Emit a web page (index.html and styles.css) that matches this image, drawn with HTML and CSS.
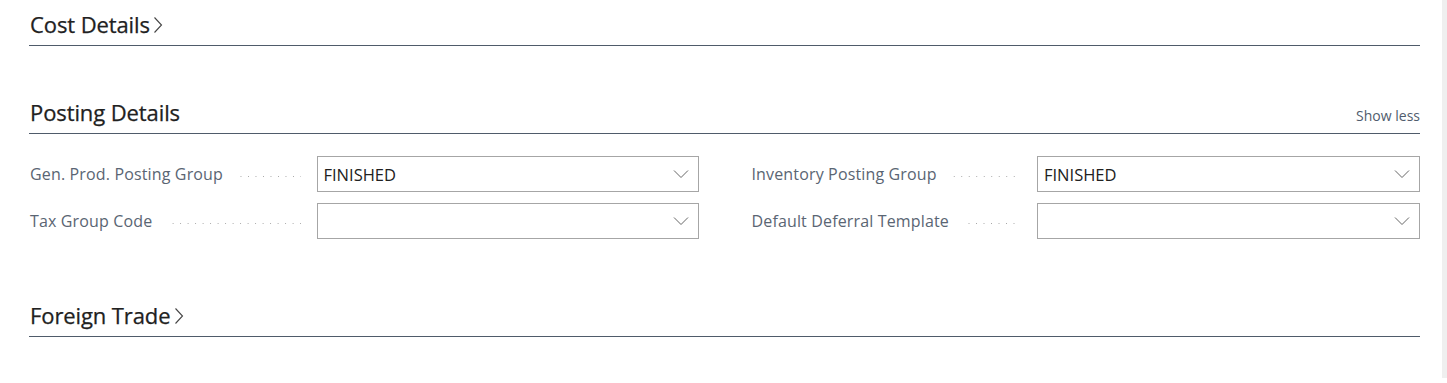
FILE: index.html
```html
<!DOCTYPE html>
<html lang="en">
<head>
    <meta charset="utf-8" />
    <title>Item Card - Posting Details</title>
    <link rel="stylesheet" href="styles.css">
</head>
<body>
    <div class="page">
        <div class="content">
            <div class="section collapsed">
                <div class="section-header">
                    <h2>Cost Details</h2>
                    <svg class="caret" width="10" height="18" viewBox="0 0 10 18"><path d="M1.5 1.5 L8.5 9 L1.5 16.5" fill="none" stroke="#444" stroke-width="1.1"/></svg>
                </div>
            </div>

            <div class="section expanded">
                <div class="section-header">
                    <h2>Posting Details</h2>
                    <span class="show-less">Show less</span>
                </div>
                <div class="fields">
                    <div class="column">
                        <div class="field">
                            <label>Gen. Prod. Posting Group</label>
                            <span class="leader"></span>
                            <div class="select">
                                <span class="value">FINISHED</span>
                                <svg class="chev" width="16" height="10" viewBox="0 0 16 10"><path d="M1 1.5 L8 8.5 L15 1.5" fill="none" stroke="#666" stroke-width="1"/></svg>
                            </div>
                        </div>
                        <div class="field">
                            <label>Tax Group Code</label>
                            <span class="leader"></span>
                            <div class="select">
                                <span class="value"></span>
                                <svg class="chev" width="16" height="10" viewBox="0 0 16 10"><path d="M1 1.5 L8 8.5 L15 1.5" fill="none" stroke="#666" stroke-width="1"/></svg>
                            </div>
                        </div>
                    </div>
                    <div class="column">
                        <div class="field">
                            <label>Inventory Posting Group</label>
                            <span class="leader"></span>
                            <div class="select">
                                <span class="value">FINISHED</span>
                                <svg class="chev" width="16" height="10" viewBox="0 0 16 10"><path d="M1 1.5 L8 8.5 L15 1.5" fill="none" stroke="#666" stroke-width="1"/></svg>
                            </div>
                        </div>
                        <div class="field">
                            <label>Default Deferral Template</label>
                            <span class="leader"></span>
                            <div class="select">
                                <span class="value"></span>
                                <svg class="chev" width="16" height="10" viewBox="0 0 16 10"><path d="M1 1.5 L8 8.5 L15 1.5" fill="none" stroke="#666" stroke-width="1"/></svg>
                            </div>
                        </div>
                    </div>
                </div>
            </div>

            <div class="section collapsed last">
                <div class="section-header">
                    <h2>Foreign Trade</h2>
                    <svg class="caret" width="10" height="18" viewBox="0 0 10 18"><path d="M1.5 1.5 L8.5 9 L1.5 16.5" fill="none" stroke="#444" stroke-width="1.1"/></svg>
                </div>
            </div>
        </div>
        <div class="scroll-track"></div>
    </div>
</body>
</html>
```

FILE: styles.css
```css
* { box-sizing: border-box; margin: 0; padding: 0; }
html, body {
    height: 100%;
}
body {
    font-family: "Open Sans", "Noto Sans", sans-serif;
    background: #fff;
    color: #212121;
}
.page {
    display: flex;
    height: 100%;
}
.content {
    flex: 1;
    padding: 0 22px 0 29px;
}
.scroll-track {
    width: 5px;
    height: 378px;
    background: #efefef;
}
.section-header {
    display: flex;
    align-items: center;
    border-bottom: 1px solid #4f5b6a;
    padding: 10px 0 7px 1px;
}
.section-header h2 {
    font-size: 22px;
    font-weight: 400;
    line-height: 28px;
    letter-spacing: -0.1px;
    -webkit-text-stroke: 0.25px #212121;
}
.caret {
    margin-left: 3px;
    margin-top: 1px;
}
.expanded {
    margin-top: 42px;
}
.expanded .section-header {
    justify-content: space-between;
}
.show-less {
    font-size: 14px;
    color: #505c6d;
    margin-top: 6px;
}
.fields {
    display: grid;
    grid-template-columns: 1fr 1fr;
    column-gap: 52px;
    padding-top: 22px;
}
.column {
    display: flex;
    flex-direction: column;
    gap: 11px;
}
.field {
    display: flex;
    align-items: center;
    height: 36px;
}
.field label {
    font-size: 16px;
    letter-spacing: 0.15px;
    color: #5a6573;
    white-space: nowrap;
    padding-left: 1px;
}
.leader {
    flex: 1;
    height: 1px;
    margin: 5px 16px 0 16px;
    background-image: linear-gradient(to right, #a8a8a8 1px, transparent 1px);
    background-size: 7.5px 1px;
    background-repeat: repeat-x;
    background-position: right;
}
.select {
    width: 382px;
    height: 36px;
    border: 1px solid #a6a6a6;
    display: flex;
    align-items: center;
    justify-content: space-between;
    padding: 0 9px 0 6px;
}
.column:last-child .select {
    width: 383px;
}
.value {
    font-size: 16.5px;
    color: #212121;
}
.last {
    margin-top: 52px;
}
```
